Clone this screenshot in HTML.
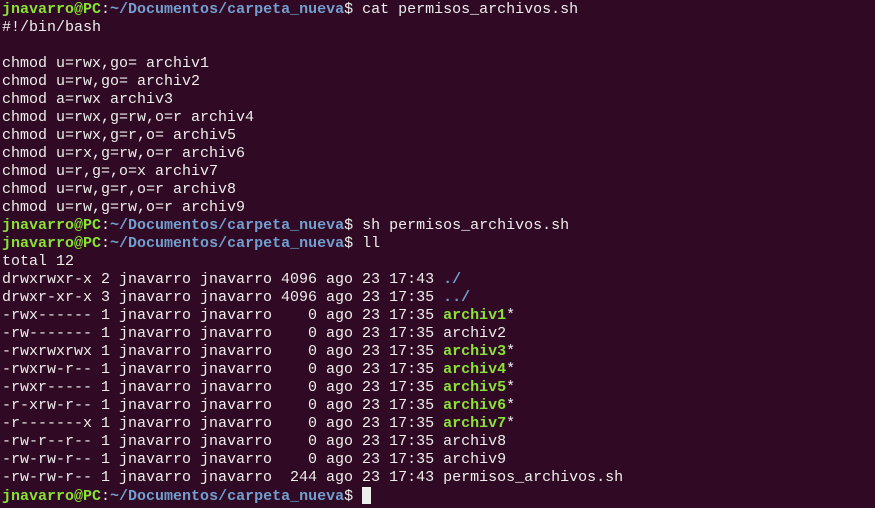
<!DOCTYPE html>
<html><head><meta charset="utf-8"><style>
html,body{margin:0;padding:0;background:#300a24;width:875px;height:508px;overflow:hidden}
pre{margin:0;padding:1px 0 0 2px;font-family:"Liberation Mono",monospace;font-size:15px;line-height:18px;color:#eeeeec;white-space:pre}
.g{color:#8ae234;font-weight:bold}.b{color:#729fcf;font-weight:bold}
.cur{display:inline-block;width:9px;height:17px;background:#eeeeec;vertical-align:-4px}
</style></head><body><pre><span class="g">jnavarro@PC</span>:<span class="b">~/Documentos/carpeta_nueva</span>$ cat permisos_archivos.sh
#!/bin/bash

chmod u=rwx,go= archiv1
chmod u=rw,go= archiv2
chmod a=rwx archiv3
chmod u=rwx,g=rw,o=r archiv4
chmod u=rwx,g=r,o= archiv5
chmod u=rx,g=rw,o=r archiv6
chmod u=r,g=,o=x archiv7
chmod u=rw,g=r,o=r archiv8
chmod u=rw,g=rw,o=r archiv9
<span class="g">jnavarro@PC</span>:<span class="b">~/Documentos/carpeta_nueva</span>$ sh permisos_archivos.sh
<span class="g">jnavarro@PC</span>:<span class="b">~/Documentos/carpeta_nueva</span>$ ll
total 12
drwxrwxr-x 2 jnavarro jnavarro 4096 ago 23 17:43 <span class="b">./</span>
drwxr-xr-x 3 jnavarro jnavarro 4096 ago 23 17:35 <span class="b">../</span>
-rwx------ 1 jnavarro jnavarro    0 ago 23 17:35 <span class="g">archiv1</span>*
-rw------- 1 jnavarro jnavarro    0 ago 23 17:35 archiv2
-rwxrwxrwx 1 jnavarro jnavarro    0 ago 23 17:35 <span class="g">archiv3</span>*
-rwxrw-r-- 1 jnavarro jnavarro    0 ago 23 17:35 <span class="g">archiv4</span>*
-rwxr----- 1 jnavarro jnavarro    0 ago 23 17:35 <span class="g">archiv5</span>*
-r-xrw-r-- 1 jnavarro jnavarro    0 ago 23 17:35 <span class="g">archiv6</span>*
-r-------x 1 jnavarro jnavarro    0 ago 23 17:35 <span class="g">archiv7</span>*
-rw-r--r-- 1 jnavarro jnavarro    0 ago 23 17:35 archiv8
-rw-rw-r-- 1 jnavarro jnavarro    0 ago 23 17:35 archiv9
-rw-rw-r-- 1 jnavarro jnavarro  244 ago 23 17:43 permisos_archivos.sh
<span class="g">jnavarro@PC</span>:<span class="b">~/Documentos/carpeta_nueva</span>$ <span class="cur"></span></pre></body></html>
